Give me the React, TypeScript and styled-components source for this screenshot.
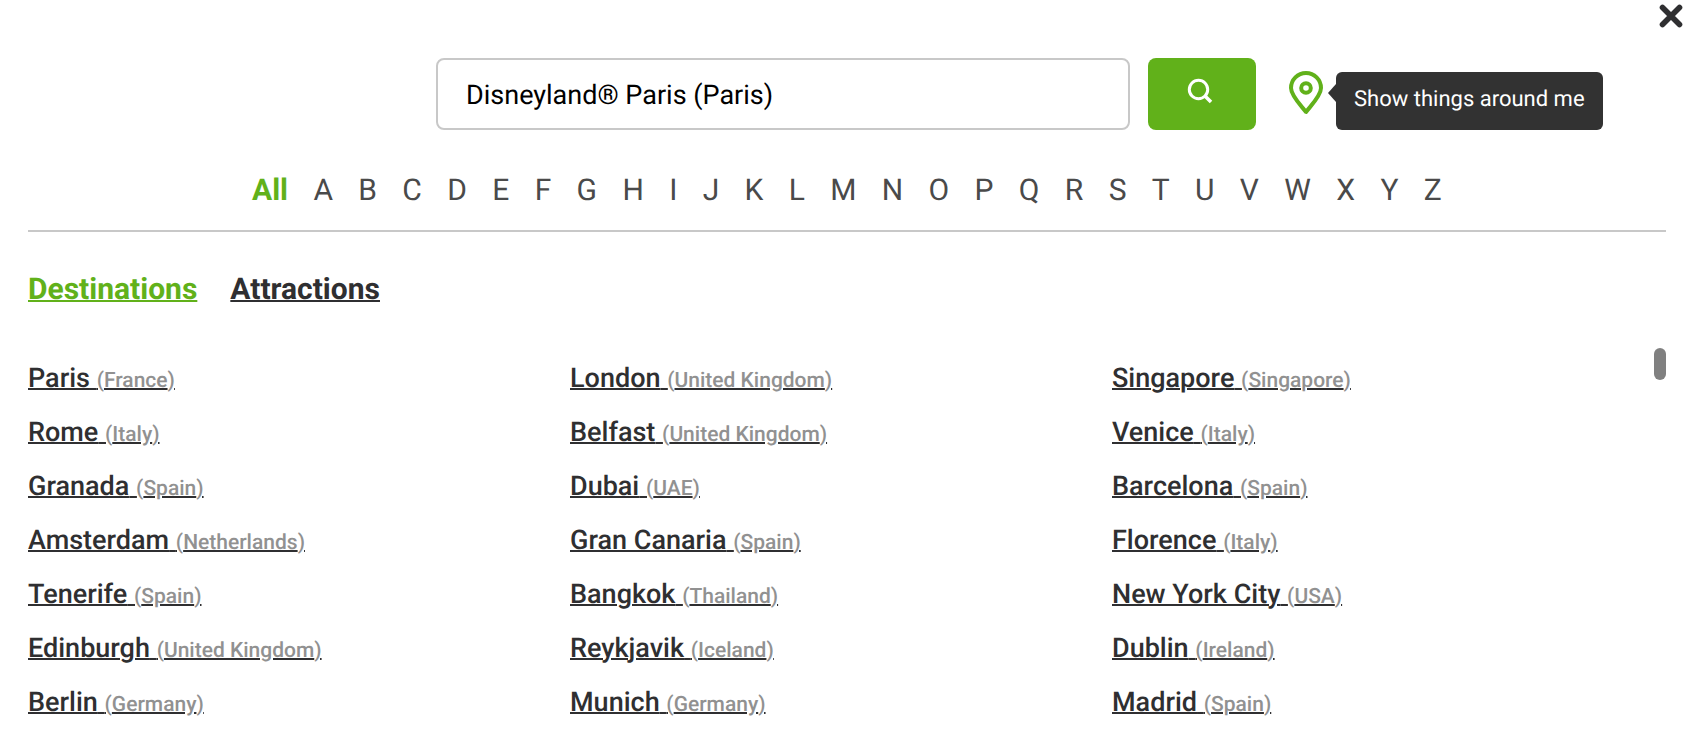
import React from "react";
import styled, { createGlobalStyle } from "styled-components";

const GlobalStyle = createGlobalStyle`
  *, *::before, *::after { box-sizing: border-box; }
  body {
    margin: 0;
    background: #fff;
    color: #2f2f31;
    font-family: Roboto, "Liberation Sans", sans-serif;
    text-rendering: geometricPrecision;
  }
`;

const Panel = styled.main`
  position: relative;
  min-height: 100vh;
  padding: 58px 28px 16px;
`;

const CloseButton = styled.button`
  position: absolute;
  top: 4px;
  right: 11px;
  display: flex;
  padding: 0;
  border: 0;
  background: none;
  color: #2f2f31;
  cursor: pointer;
`;

const SearchBar = styled.form`
  display: grid;
  grid-template-columns: 1fr minmax(0, 694px) 1fr;
  column-gap: 18px;
  margin-right: 128px;
`;

const SearchInput = styled.input`
  grid-column: 2;
  width: 100%;
  height: 72px;
  padding: 2px 28px 0;
  border: 2px solid #c8c8c8;
  border-radius: 8px;
  background: #fff;
  color: #000;
  font: 400 27px Roboto, "Liberation Sans", sans-serif;
  text-rendering: geometricPrecision;
  outline: none;
`;

const SearchActions = styled.div`
  display: flex;
  align-items: flex-start;
  gap: 33px;
`;

const SearchButton = styled.button`
  display: flex;
  flex: none;
  align-items: center;
  justify-content: center;
  width: 108px;
  height: 72px;
  padding: 0 4px 6px 0;
  border: 0;
  border-radius: 8px;
  background: #61b11a;
  color: #fff;
  cursor: pointer;
`;

const NearbyButton = styled.button`
  position: relative;
  display: flex;
  flex: none;
  margin: 13px 0 0;
  padding: 0;
  border: 0;
  background: none;
  color: #61b11a;
  text-rendering: geometricPrecision;
  cursor: pointer;
`;

const Tooltip = styled.span`
  position: absolute;
  top: 1px;
  left: 47px;
  padding: 0 18px 2px;
  border-radius: 6px;
  background: #323232;
  color: #fff;
  font: 400 22px/56px Roboto, "Liberation Sans", sans-serif;
  white-space: nowrap;

  &::before {
    content: "";
    position: absolute;
    top: 12px;
    left: -8px;
    border: solid transparent;
    border-width: 9px 8px 9px 0;
    border-right-color: #323232;
  }
`;

const Alphabet = styled.nav`
  padding: 40px 0 18px;
  border-bottom: 2px solid #c8c8c8;
`;

const LetterRow = styled.div`
  display: flex;
  justify-content: space-between;
  max-width: 1190px;
  margin: 0 auto;
`;

const Letter = styled.a<{ $active?: boolean }>`
  color: ${({ $active }) => ($active ? "#61b11a" : "#4a4a4a")};
  font-size: 30px;
  font-weight: ${({ $active }) => ($active ? 700 : 400)};
  line-height: 42px;
  text-decoration: none;
`;

const Tabs = styled.nav`
  display: flex;
  gap: 33px;
  padding: 38px 0;
`;

const Tab = styled.a<{ $active?: boolean }>`
  color: ${({ $active }) => ($active ? "#61b11a" : "#2f2f31")};
  font-size: 30px;
  font-weight: 700;
  line-height: 40px;
  text-decoration: underline 2px;
`;

const Results = styled.section`
  display: flex;
  align-items: flex-start;
`;

const Places = styled.ul`
  display: grid;
  flex: 1;
  grid-template-columns: repeat(3, 1fr);
  margin: 3px 0 0;
  padding: 0;
  list-style: none;
`;

const Place = styled.li`
  height: 54px;
  font-size: 27px;
  line-height: 54px;
`;

const PlaceLink = styled.a`
  color: #2f2f31;
  font-weight: 500;
  text-decoration: underline 2px;
`;

const Country = styled.span`
  color: #919191;
  font-size: 21px;
`;

const ScrollThumb = styled.div`
  flex: none;
  width: 12px;
  height: 32px;
  border-radius: 6px;
  background: #808080;
`;

const letters = "ABCDEFGHIJKLMNOPQRSTUVWXYZ".split("");

const places = [
  ["Paris", "France"],
  ["London", "United Kingdom"],
  ["Singapore", "Singapore"],
  ["Rome", "Italy"],
  ["Belfast", "United Kingdom"],
  ["Venice", "Italy"],
  ["Granada", "Spain"],
  ["Dubai", "UAE"],
  ["Barcelona", "Spain"],
  ["Amsterdam", "Netherlands"],
  ["Gran Canaria", "Spain"],
  ["Florence", "Italy"],
  ["Tenerife", "Spain"],
  ["Bangkok", "Thailand"],
  ["New York City", "USA"],
  ["Edinburgh", "United Kingdom"],
  ["Reykjavik", "Iceland"],
  ["Dublin", "Ireland"],
  ["Berlin", "Germany"],
  ["Munich", "Germany"],
  ["Madrid", "Spain"],
];

const CloseIcon = () => (
  <svg width="24" height="24" viewBox="0 0 24 24" fill="none" stroke="currentColor" strokeWidth="5.6" strokeLinecap="round" aria-hidden="true">
    <path d="M3.5 3.5 20.5 20.5M20.5 3.5 3.5 20.5" />
  </svg>
);

const SearchIcon = () => (
  <svg width="26" height="26" viewBox="0 0 26 26" fill="none" stroke="currentColor" strokeWidth="3" aria-hidden="true">
    <circle cx="11.5" cy="11.5" r="9.2" />
    <path d="M17.5 17.5 24 24" strokeWidth="3.6" />
  </svg>
);

const PinIcon = () => (
  <svg width="34" height="44" viewBox="0 0 34 44" fill="none" stroke="currentColor" strokeWidth="4" strokeLinejoin="round" aria-hidden="true">
    <path d="M17 41C13 35.5 2 25 2 17A15 15 0 0 1 32 17C32 25 21 35.5 17 41Z" />
    <circle cx="17" cy="17" r="4.8" />
  </svg>
);

export default function App() {
  return (
    <>
      <GlobalStyle />
      <Panel>
        <CloseButton type="button" aria-label="Close">
          <CloseIcon />
        </CloseButton>
        <SearchBar onSubmit={(event) => event.preventDefault()}>
          <SearchInput type="text" aria-label="Destination or attraction" defaultValue="Disneyland® Paris (Paris)" />
          <SearchActions>
            <SearchButton type="submit" aria-label="Search">
              <SearchIcon />
            </SearchButton>
            <NearbyButton type="button">
              <PinIcon />
              <Tooltip>Show things around me</Tooltip>
            </NearbyButton>
          </SearchActions>
        </SearchBar>
        <Alphabet aria-label="Filter by letter">
          <LetterRow>
            <Letter href="#all" $active>
              All
            </Letter>
            {letters.map((letter) => (
              <Letter key={letter} href={`#${letter}`}>
                {letter}
              </Letter>
            ))}
          </LetterRow>
        </Alphabet>
        <Tabs aria-label="Result type">
          <Tab href="#destinations" $active>
            Destinations
          </Tab>
          <Tab href="#attractions">Attractions</Tab>
        </Tabs>
        <Results>
          <Places>
            {places.map(([name, country]) => (
              <Place key={name}>
                <PlaceLink href={`#${name}`}>
                  {name} <Country>({country})</Country>
                </PlaceLink>
              </Place>
            ))}
          </Places>
          <ScrollThumb />
        </Results>
      </Panel>
    </>
  );
}
